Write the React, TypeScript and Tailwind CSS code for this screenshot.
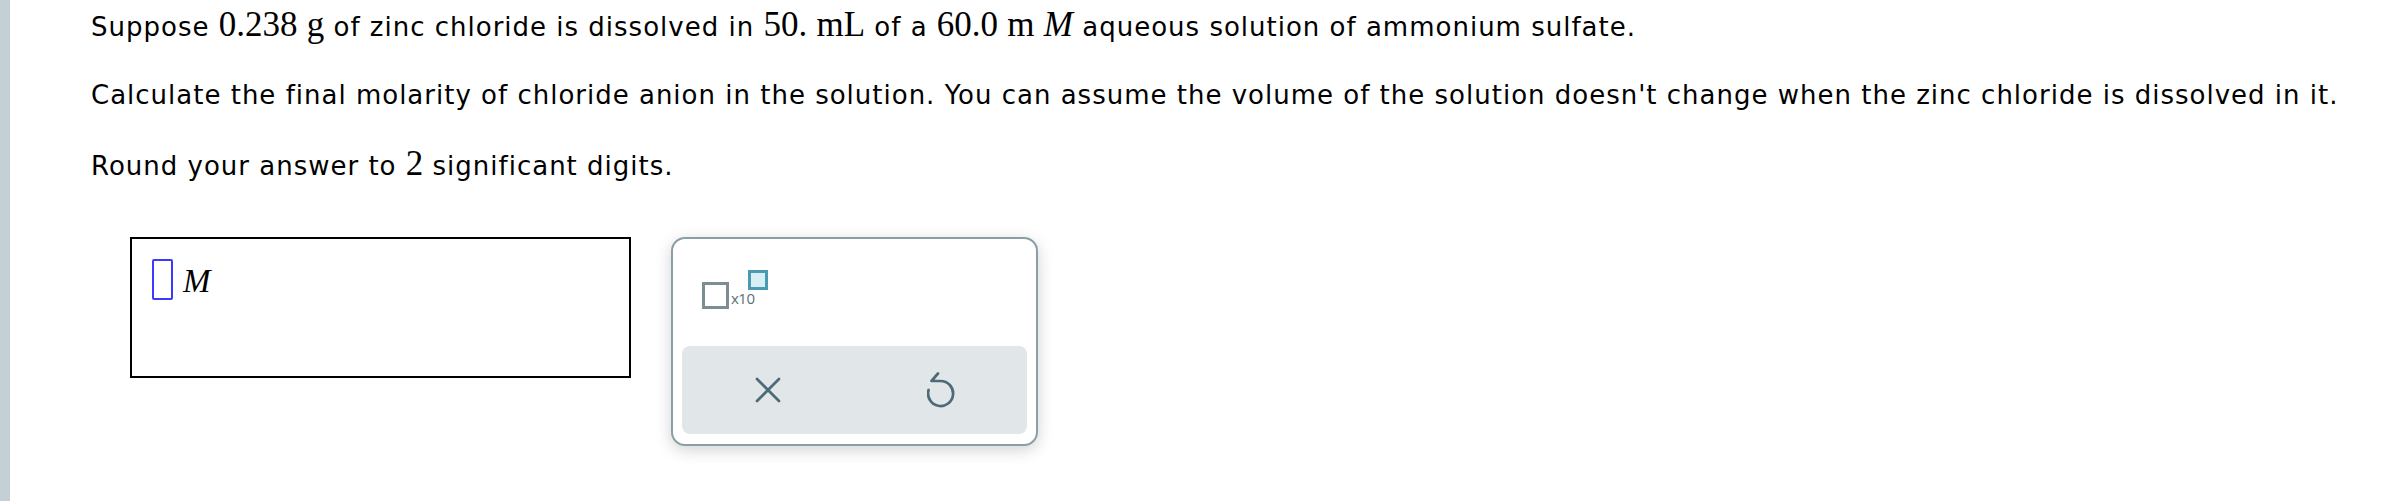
import React from 'react'

const text = "font-['DejaVu_Sans',Verdana,sans-serif]"
const math = "font-['Liberation_Serif','Times_New_Roman',serif] text-[35px] leading-none tracking-normal"

function Keypad() {
  return (
    <div className="flex h-[209px] w-[367px] flex-col rounded-[14px] border-2 border-[#8a9ea7] bg-white px-[9px] pb-[10px] shadow-[0_4px_16px_rgba(0,0,0,0.18)]">
      <div className="flex flex-1 items-start pl-[20px] pt-[31px]">
        <div className="flex items-start">
          <div className="mt-[12px] h-[27px] w-[27px] border-[3px] border-[#7b8d95]" />
          <span className="mt-[21px] ml-[2px] font-['Open_Sans',sans-serif] text-[15px] leading-none tracking-[-0.5px] text-[#5b707a]">
            x10
          </span>
          <div className="-ml-[7px] h-[20px] w-[20px] border-[3px] border-[#4a9bb1] bg-[#d6eef4]" />
        </div>
      </div>
      <div className="grid h-[88px] grid-cols-2 rounded-[8px] bg-[#e1e6e9]">
        <div className="flex items-center justify-center">
          <svg width="26" height="26" viewBox="0 0 26 26" fill="none" stroke="#4d6b77" strokeWidth="2.7" strokeLinecap="round">
            <path d="M2 2L24 24M24 2L2 24" />
          </svg>
        </div>
        <div className="flex items-center justify-center">
          <svg width="28" height="36" viewBox="0 0 28 36" fill="none" stroke="#4d6b77" strokeWidth="2.7" strokeLinecap="round" strokeLinejoin="round">
            <path d="M11 1.5L4.5 9H13.5A12.5 12.5 0 1 1 1.6 18" />
          </svg>
        </div>
      </div>
    </div>
  )
}

export default function App() {
  return (
    <div className={`flex min-h-[501px] bg-white text-black ${text}`}>
      <div className="w-[10px] shrink-0 bg-[#c5d0d6]" />
      <div className="flex-1 pl-[81px] pt-[7px]">
        <p className="text-[26px] leading-[36px] tracking-[1px]">
          Suppose <span className={math}>0.238</span> <span className={math}>g</span> of zinc chloride is dissolved in{' '}
          <span className={math}>50.</span> <span className={math}>mL</span> of a <span className={math}>60.0</span>{' '}
          <span className={math}>m</span> <span className={`${math} italic`}>M</span> aqueous solution of ammonium sulfate.
        </p>
        <p className="mt-[32px] text-[26px] leading-[36px] tracking-[1px]">
          Calculate the final molarity of chloride anion in the solution. You can assume the volume of the solution doesn't change when the zinc chloride is dissolved in it.
        </p>
        <p className="mt-[33px] text-[26px] leading-[36px] tracking-[1px]">
          Round your answer to <span className={math}>2</span> significant digits.
        </p>
        <div className="mt-[53px] flex items-start gap-[40px] pl-[39px]">
          <div className="h-[141px] w-[501px] border-2 border-black pl-[20px] pt-[20px]">
            <div className="flex items-start">
              <div className="h-[41px] w-[21px] rounded-[2px] border-2 border-[#3b3bff]" />
              <span className="ml-[10px] mt-[6px] font-['Liberation_Serif',serif] text-[33px] italic leading-none">M</span>
            </div>
          </div>
          <Keypad />
        </div>
      </div>
    </div>
  )
}
